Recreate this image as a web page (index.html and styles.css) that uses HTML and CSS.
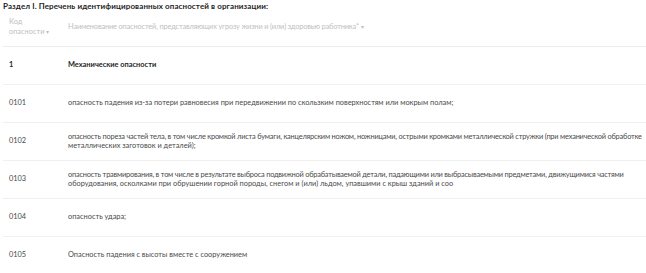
FILE: index.html
```html
<!DOCTYPE html>
<html lang="ru">
<head>
<meta charset="utf-8">
<link rel="stylesheet" href="styles.css">
</head>
<body>
<div class="page">
  <h2 class="title">Раздел I. Перечень идентифицированных опасностей в организации:</h2>
  <div class="table">
    <div class="row head">
      <div class="code">Код<br>опасности <span class="sort">▾</span></div>
      <div class="desc">Наименование опасностей, представляющих угрозу жизни и (или) здоровью работника* <span class="sort">▾</span></div>
    </div>
    <div class="row group">
      <div class="code">1</div>
      <div class="desc">Механические опасности</div>
    </div>
    <div class="row">
      <div class="code">0101</div>
      <div class="desc">опасность падения из-за потери равновесия при передвижении по скользким поверхностям или мокрым полам;</div>
    </div>
    <div class="row">
      <div class="code">0102</div>
      <div class="desc"><span class="ln tight">опасность пореза частей тела, в том числе кромкой листа бумаги, канцелярским ножом, ножницами, острыми кромками металлической стружки (при механической обработке</span> <span class="ln">металлических заготовок и деталей);</span></div>
    </div>
    <div class="row">
      <div class="code">0103</div>
      <div class="desc"><span class="ln tight">опасность травмирования, в том числе в результате выброса подвижной обрабатываемой детали, падающими или выбрасываемыми предметами, движущимися частями</span> <span class="ln">оборудования, осколками при обрушении горной породы, снегом и (или) льдом, упавшими с крыш зданий и соо</span></div>
    </div>
    <div class="row">
      <div class="code">0104</div>
      <div class="desc">опасность удара;</div>
    </div>
    <div class="row last">
      <div class="code">0105</div>
      <div class="desc">Опасность падения с высоты вместе с сооружением</div>
    </div>
  </div>
</div>
</body>
</html>
```
FILE: styles.css
```css
html, body {
  margin: 0;
  padding: 0;
  background: #ffffff;
  overflow: hidden;
}
body {
  font-family: "Lato", "Noto Sans", sans-serif;
  color: #4a4a4a;
}
.page {
  padding: 0 0 0 3px;
}
.title {
  margin: 0;
  padding-top: 1px;
  font-size: 8px;
  line-height: 10px;
  font-weight: 700;
  color: #1f1f1f;
  letter-spacing: 0.1px;
}
.table {
  margin-top: 5px;
}
.row {
  display: grid;
  grid-template-columns: 59px 1fr;
  align-items: center;
  min-height: 37px;
  border-bottom: 1px solid #f0f0f0;
  font-size: 7.4px;
  line-height: 8.5px;
}
.row > div {
  padding: 0 6px;
}
.row .desc {
  padding-right: 0;
}
.ln {
  display: block;
  white-space: nowrap;
}
.ln.tight {
  letter-spacing: -0.2px;
}
.row.head {
  min-height: 0;
  padding: 1px 0 9px;
  color: #c0c0c0;
  border-bottom-color: #ececec;
}
.row.head .desc {
  letter-spacing: -0.15px;
}
.row.head .code {
  line-height: 10px;
}
.sort {
  font-size: 6px;
}
.row.group {
  font-weight: 700;
  color: #1f1f1f;
}
.row.last {
  border-bottom: none;
}
```
